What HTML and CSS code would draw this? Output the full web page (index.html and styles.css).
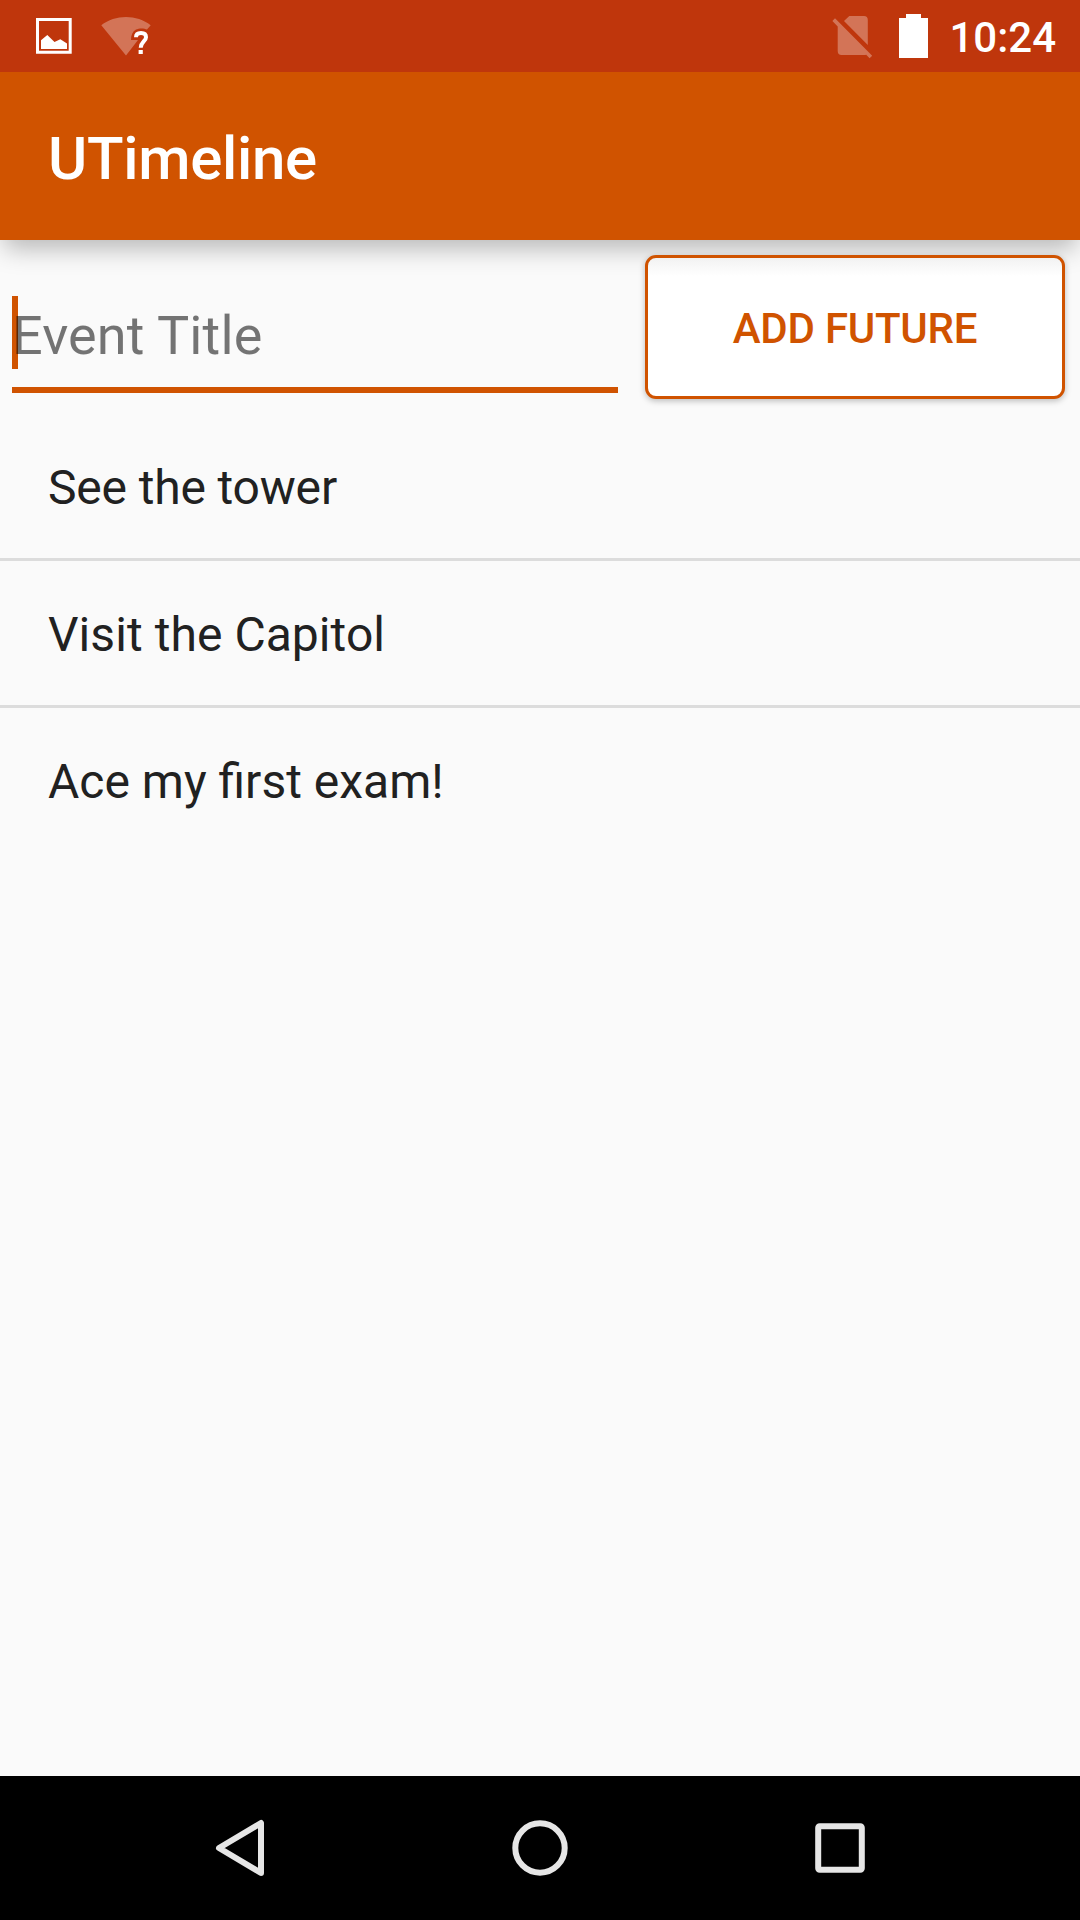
FILE: index.html
```html
<!DOCTYPE html>
<html lang="en">
<head>
<meta charset="utf-8">
<title>UTimeline</title>
<link rel="stylesheet" href="styles.css">
</head>
<body>
<div class="screen">
  <div class="status-bar">
    <svg class="status-left" width="180" height="72" viewBox="0 0 180 72" fill="#fff">
      <path fill-rule="evenodd" d="M36 18H71.7V53.7H36ZM39 21V50.7H68.7V21Z"/>
      <path d="M41 49V40.2L47.3 35L54.5 42L60.3 39.2L67 43.6V49Z"/>
      <path opacity=".31" d="M126 55.5L101.3 25.3C115 14.2 137 14.2 150.7 25.3L147 29.5C144 28 139 28 136 29.5C132.5 31.5 131 35 131 40H138Z"/>
      <path fill="none" stroke="#fff" stroke-width="4" d="M136 37.3C136 34.3 138 33 141 33C144.5 33 146 34.8 146 37.2C146 41.2 140.7 42 140.7 47.8"/>
      <path d="M138.6 50H142.8V54H138.6Z"/>
    </svg>
    <div class="status-right">
      <svg width="108" height="72" viewBox="828 0 108 72" fill="#fff">
        <path opacity=".31" d="M835 18.3L872.2 55.7L869.6 58.2L866.2 54.8Q865.3 55 864 55H841.5Q837.7 55 837.7 51V26.4L832.4 21ZM844 21L849.3 16H864Q867.8 16 867.8 20V45Z"/>
        <path d="M899 18H906V14H921V18H928V58H899Z"/>
      </svg>
      <span class="clock">10:24</span>
    </div>
  </div>
  <header class="toolbar"><h1>UTimeline</h1></header>
  <main class="content">
    <div class="entry-row">
      <div class="field"><span class="caret"></span><span class="hint">Event Title</span></div>
      <button class="add">ADD FUTURE</button>
    </div>
    <ul class="events">
      <li class="tight">See the tower</li>
      <li class="loose">Visit the Capitol</li>
      <li>Ace my first exam!</li>
    </ul>
  </main>
  <nav class="nav-bar">
    <svg width="60" height="60" viewBox="0 0 60 60"><path d="M9 30L51 5V55Z"/></svg>
    <svg width="60" height="60" viewBox="0 0 60 60"><circle cx="30" cy="30" r="24.7"/></svg>
    <svg width="60" height="60" viewBox="0 0 60 60"><rect x="8.2" y="8.2" width="43.6" height="43.6" rx="1.5"/></svg>
  </nav>
</div>
</body>
</html>
```
FILE: styles.css
```css
* { box-sizing: border-box; }
body { margin: 0; font-family: Roboto, sans-serif; }
.screen {
  width: 1080px;
  height: 1920px;
  display: flex;
  flex-direction: column;
  background: #fafafa;
  overflow: hidden;
}
.status-bar {
  z-index: 2;
  height: 72px;
  flex: none;
  display: flex;
  justify-content: space-between;
  background: #bf360c;
  color: #fff;
}
.status-right { display: flex; gap: 13px; padding-right: 24px; }
.clock { font-size: 42px; font-weight: 500; line-height: 72px; padding-top: 2px; }
.toolbar {
  height: 168px;
  flex: none;
  padding: 3px 48px 0;
  background: #d05300;
  color: #fff;
  box-shadow: 0 12px 24px -4px rgba(0, 0, 0, .28);
  z-index: 1;
}
.toolbar h1 { margin: 0; font-size: 60px; font-weight: 500; line-height: 168px; letter-spacing: -.3px; }
.content { flex: 1; }
.entry-row {
  display: flex;
  justify-content: space-between;
  height: 174px;
  padding: 15px 15px 0 12px;
}
.field {
  position: relative;
  width: 606px;
  height: 138px;
  padding-top: 41px;
  border-bottom: 6px solid #d05300;
}
.caret { position: absolute; left: 0; top: 41px; width: 6px; height: 73px; background: #d05300; }
.hint {
  position: relative;
  display: block;
  font-size: 54px;
  line-height: 80px;
  letter-spacing: .12px;
  color: rgba(0, 0, 0, .54);
}
.add {
  position: relative;
  z-index: 2;
  width: 420px;
  height: 144px;
  padding: 3px 0 0;
  border: 3px solid #d05300;
  border-radius: 11px;
  background: linear-gradient(#f2f2f2, #fff 18px) #fff;
  box-shadow: 0 2px 6px rgba(0, 0, 0, .25);
  color: #d05300;
  font: 500 42px Roboto, sans-serif;
  letter-spacing: -.25px;
}
.events { margin: 0; padding: 0; list-style: none; }
.events li {
  height: 147px;
  padding: 2px 48px 0;
  border-bottom: 3px solid #dcdcdc;
  font-size: 48px;
  line-height: 144px;
  color: #212121;
}
.events .tight { letter-spacing: -.17px; }
.events .loose { letter-spacing: .06px; }
.events li:last-child { border-bottom: 0; }
.nav-bar {
  height: 144px;
  flex: none;
  display: flex;
  justify-content: center;
  align-items: center;
  gap: 240px;
  background: #000;
}
.nav-bar svg { fill: none; stroke: #e6e6e6; stroke-width: 6; stroke-linejoin: round; }
```
